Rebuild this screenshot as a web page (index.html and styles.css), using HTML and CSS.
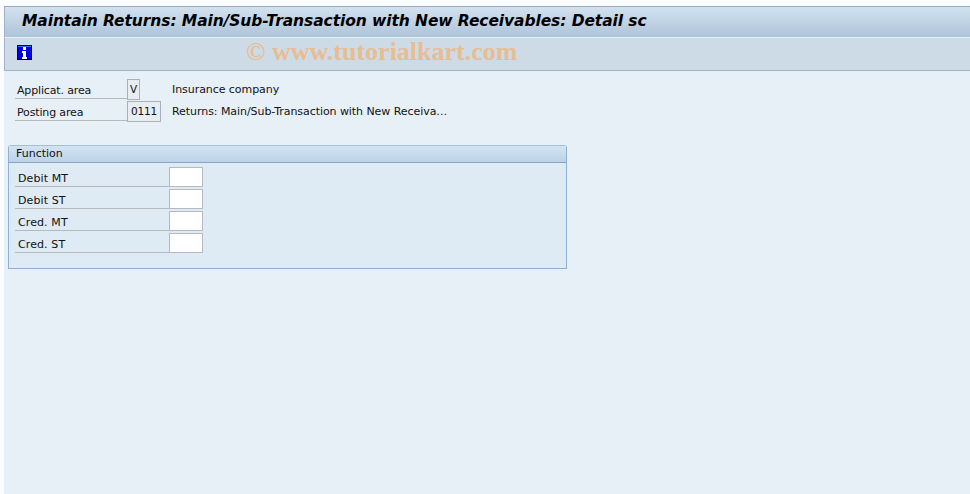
FILE: index.html
```html
<!DOCTYPE html>
<html>
<head>
  <meta charset="utf-8">
  <title>Maintain Returns</title>
  <link rel="stylesheet" href="styles.css">
</head>
<body>
  <div class="screen">
    <h1 class="title">Maintain Returns: Main/Sub-Transaction with New Receivables: Detail sc</h1>
    <div class="toolbar">
      <svg class="info-icon" width="15" height="15" viewBox="0 0 15 15">
        <rect x="0.5" y="0.5" width="14" height="14" fill="#0000e0" stroke="#000018"/>
        <rect x="1" y="1" width="13" height="1" fill="#3a6cff"/>
        <rect x="6" y="2" width="3" height="3" fill="#fff"/>
        <path d="M5 6h4v6h1v2H5v-2h1V8H5z" fill="#fff"/>
      </svg>
      <span class="watermark">© www.tutorialkart.com</span>
    </div>
    <div class="content">
      <div class="field-row">
        <span class="label label-top">Applicat. area</span>
        <span class="key key-short">V</span>
        <span class="desc">Insurance company</span>
      </div>
      <div class="field-row">
        <span class="label label-top">Posting area</span>
        <span class="key key-long">0111</span>
        <span class="desc">Returns: Main/Sub-Transaction with New Receiva…</span>
      </div>
      <div class="group">
        <div class="group-head">Function</div>
        <div class="group-body">
          <div class="input-row"><span class="label label-group">Debit MT</span><span class="input"></span></div>
          <div class="input-row"><span class="label label-group">Debit ST</span><span class="input"></span></div>
          <div class="input-row"><span class="label label-group">Cred. MT</span><span class="input"></span></div>
          <div class="input-row"><span class="label label-group">Cred. ST</span><span class="input"></span></div>
        </div>
      </div>
    </div>
  </div>
</body>
</html>
```
FILE: styles.css
```css
html, body {
  margin: 0;
  padding: 0;
  height: 100%;
  background: #fbfcfe;
}
body {
  font-family: "DejaVu Sans", Verdana, sans-serif;
  font-size: 11px;
  color: #111;
  overflow: hidden;
}
.screen {
  height: 488px;
  margin-top: 6px;
  margin-left: 4px;
  background: #e8f0f7;
  display: flex;
  flex-direction: column;
}
.title {
  height: 30px;
  margin: 0;
  padding-left: 17px;
  border-top: 1px solid #99a9c0;
  border-bottom: 1px solid #e6eef5;
  border-left: 1px solid #a3b3c7;
  background: linear-gradient(#d2e1ee, #aec4da);
  font-size: 15.5px;
  letter-spacing: -0.09px;
  line-height: 28px;
  font-weight: bold;
  font-style: italic;
  color: #000;
  white-space: nowrap;
  overflow: hidden;
}
.toolbar {
  height: 32px;
  border-bottom: 1px solid #a3b3c7;
  border-left: 1px solid #a3b3c7;
  background: #cddbe6;
  display: flex;
  align-items: flex-start;
  position: relative;
}
.info-icon {
  margin: 7px 0 0 12px;
}
.watermark {
  position: absolute;
  left: 241px;
  top: 1px;
  font-family: "Liberation Serif", serif;
  font-size: 26px;
  font-weight: bold;
  line-height: 26px;
  color: #e8bd92;
  white-space: nowrap;
}
.content {
  padding: 8px 0 0 4px;
}
.field-row {
  height: 22px;
  margin-left: 7px;
  display: flex;
  align-items: flex-start;
}
.label {
  display: block;
  height: 17px;
  padding-top: 2px;
  line-height: 20px;
  border-bottom: 1px solid #b5b9bd;
  white-space: nowrap;
}
.label-top {
  width: 110px;
  padding-left: 2px;
  letter-spacing: -0.15px;
}
.key {
  height: 19px;
  line-height: 19px;
  text-align: center;
  font-size: 10.5px;
  letter-spacing: -0.15px;
  background: #e8edf2;
  border: 1px solid #a9b1b9;
}
.key-short {
  width: 11px;
}
.key-long {
  width: 32px;
}
.desc {
  padding-top: 1px;
  line-height: 20px;
  letter-spacing: -0.06px;
  white-space: nowrap;
}
.key-short + .desc {
  margin-left: 32px;
}
.key-long + .desc {
  margin-left: 11px;
}
.group {
  width: 557px;
  height: 122px;
  margin-top: 22px;
  display: flex;
  flex-direction: column;
  border: 1px solid #8db0d3;
  border-top-color: #a5bfd9;
  border-radius: 3px 3px 0 0;
  background: #deeaf4;
}
.group-head {
  height: 16px;
  line-height: 15px;
  padding-left: 7px;
  border-bottom: 1px solid #86a6c6;
  background: linear-gradient(#d4e3f0, #bdd3e8);
}
.group-body {
  padding: 4px 0 0 6px;
}
.input-row {
  height: 22px;
  display: flex;
  align-items: flex-start;
}
.label-group {
  width: 151px;
  padding-left: 3px;
  letter-spacing: 0.1px;
}
.input {
  width: 32px;
  height: 18px;
  background: #fff;
  border: 1px solid #b4bac0;
}
```
